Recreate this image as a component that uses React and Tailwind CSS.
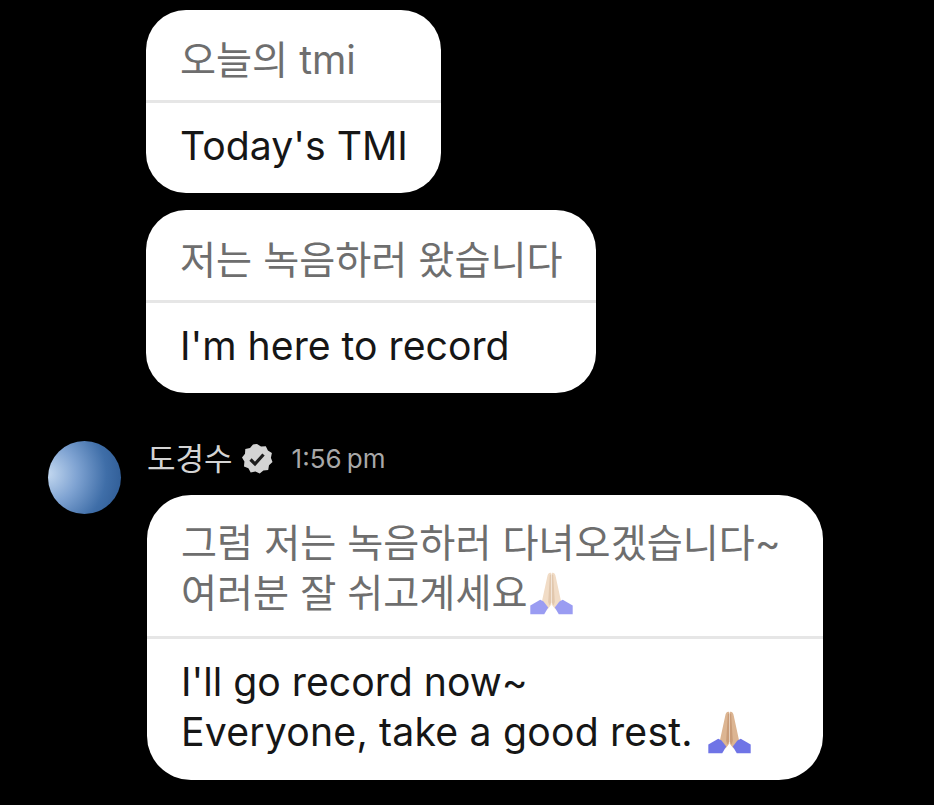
import React from 'react';

const fontStack = "font-['Inter','Noto_Sans_CJK_KR',sans-serif]";

// folded hands emoji, the sleeves are periwinkle in both
const PrayEmoji = ({ skin = '#f1dcc6', dark = '#e2c8ae', sleeve = '#9a9cf2', className = '' }) => (
  <svg viewBox="90 35 130 130" className={className}>
    <path d="M154 38 C148 36 144 40 142 50 L126 124 L143 148 L154 134 Z" fill={skin} />
    <path d="M156 38 C162 36 166 40 168 50 L184 124 L167 148 L156 134 Z" fill={skin} />
    <path d="M150 44 L145 125 L148 136 L154 128 L154 42 Z M160 44 L165 125 L162 136 L156 128 L156 42 Z" fill={dark} />
    <path d="M91 136 L121 119 L131 124 L145 142 L133 163 L91 163 Z" fill={sleeve} />
    <path d="M219 136 L189 119 L179 124 L165 142 L177 163 L219 163 Z" fill={sleeve} />
  </svg>
);

const Badge = () => (
  <svg viewBox="0 0 32 32" className="w-[32px] h-[32px] shrink-0">
    <path
      d="M16 1 L20 3.6 L24.8 3.2 L26.9 7.5 L30.9 10 L29.9 14.7 L31.5 19 L28 22.3 L27.2 27 L22.4 27.4 L18.7 30.6 L14.4 28.6 L9.7 29.5 L7.4 25.3 L3 23.4 L3.4 18.6 L1 14.5 L4 10.8 L4.3 6 L9 4.9 L12 1.4 Z"
      fill="#d4d4d4"
    />
    <path d="M9.5 16.5 L14 21 L22.5 11.5" fill="none" stroke="#1c1c1c" strokeWidth="3.2" />
  </svg>
);

const Bubble = ({ top, bottom }) => (
  <div className="bg-white rounded-[40px] w-fit">
    <div className="pl-[34px] pr-[33px] pt-[25px] pb-[15px] text-[39.2px] leading-[50px] text-[#6e6e6e] whitespace-nowrap">{top}</div>
    <div className="h-[3px] bg-[#e6e6e6]" />
    <div className="pl-[34px] pr-[33px] pt-[18px] pb-[22px] text-[39.2px] leading-[50px] text-[#161616] whitespace-nowrap">{bottom}</div>
  </div>
);

function App() {
  return (
    <div className={`bg-black w-[934px] h-[805px] overflow-hidden pt-[10px] ${fontStack}`}>
      <div className="pl-[146px] flex flex-col gap-[17px]">
        <Bubble top="오늘의 tmi" bottom="Today's TMI" />
        <Bubble top="저는 녹음하러 왔습니다" bottom="I'm here to record" />
      </div>

      <div className="flex mt-[48px] pl-[48px] gap-[26px]">
        <div className="w-[73px] h-[73px] rounded-full shrink-0 bg-[radial-gradient(circle_at_0%_45%,#c3d8f0_0%,#7fa3d2_35%,#3f6ea8_70%,#2a568f_100%)]" />
        <div className="flex flex-col">
          <div className="flex items-center h-[36px] mb-[18px] text-[#d4d4d4]">
            <span className="text-[31px] leading-[36px]">도경수</span>
            <span className="ml-[8px]"><Badge /></span>
            <span className="ml-[19px] text-[26px] leading-[36px] text-[#a8a8a8] [word-spacing:-2px]">1:56 pm</span>
          </div>
          <div className="bg-white rounded-[44px] w-[676px]">
            <div className="px-[34px] pt-[23px] pb-[18px] text-[39.2px] leading-[50px] text-[#6e6e6e]">
              <div className="whitespace-nowrap">그럼 저는 녹음하러 다녀오겠습니다~</div>
              <div className="flex items-center whitespace-nowrap">
                여러분 잘 쉬고계세요
                <PrayEmoji className="ml-[2px] w-[43px] h-[43px]" />
              </div>
            </div>
            <div className="h-[3px] bg-[#e6e6e6]" />
            <div className="px-[34px] pt-[18px] pb-[23px] text-[39.2px] leading-[50px] text-[#161616]">
              <div className="whitespace-nowrap">I'll go record now~</div>
              <div className="flex items-center whitespace-nowrap tracking-[0.2px]">
                Everyone, take a good rest.
                <PrayEmoji skin="#dcb592" dark="#c99c78" sleeve="#6f74e6" className="ml-[15px] w-[43px] h-[43px]" />
              </div>
            </div>
          </div>
        </div>
      </div>
    </div>
  );
}

export default App;
